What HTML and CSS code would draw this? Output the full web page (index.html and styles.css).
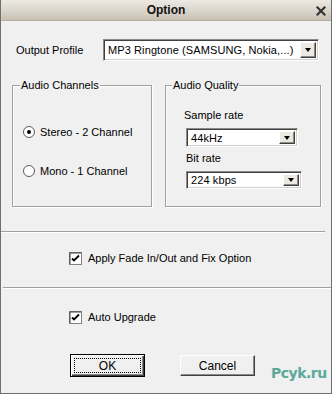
FILE: index.html
```html
<!DOCTYPE html>
<html lang="en">
<head>
    <meta charset="UTF-8">
    <meta name="viewport" content="width=device-width, initial-scale=1.0">
    <title>Option</title>
    <link rel="stylesheet" href="styles.css">
</head>
<body>
    <div class="window">
        <div class="titlebar">
            <span class="title">Option</span>
            <svg class="close" width="10" height="10" viewBox="0 0 10 10">
                <path d="M1.5 1.5l7 7M8.5 1.5l-7 7" stroke="#333" stroke-width="2.2" stroke-linecap="square"/>
            </svg>
        </div>

        <div class="content">
            <div class="profileRow">
                <label class="profileLabel">Output Profile</label>
                <div class="combo comboWide">
                    <span class="comboText">MP3 Ringtone (SAMSUNG, Nokia,...)</span>
                    <span class="comboBtn"><span class="arrow"></span></span>
                </div>
            </div>

            <div class="groups">
                <fieldset class="group groupChannels">
                    <legend>Audio Channels</legend>
                    <div class="radio first">
                        <svg width="12" height="12" viewBox="0 0 12 12">
                            <circle cx="6" cy="6" r="5.5" fill="#fff" stroke="#5a5a5a"/>
                            <circle cx="6" cy="6" r="2" fill="#000"/>
                        </svg>
                        <span>Stereo - 2 Channel</span>
                    </div>
                    <div class="radio">
                        <svg width="12" height="12" viewBox="0 0 12 12">
                            <circle cx="6" cy="6" r="5.5" fill="#fff" stroke="#5a5a5a"/>
                        </svg>
                        <span>Mono - 1 Channel</span>
                    </div>
                </fieldset>

                <fieldset class="group groupQuality">
                    <legend>Audio Quality</legend>
                    <div class="fieldLabel sample">Sample rate</div>
                    <div class="combo comboSample">
                        <span class="comboText">44kHz</span>
                        <span class="comboBtn"><span class="arrow"></span></span>
                    </div>
                    <div class="fieldLabel bit">Bit rate</div>
                    <div class="combo comboBit">
                        <span class="comboText">224 kbps</span>
                        <span class="comboBtn"><span class="arrow"></span></span>
                    </div>
                </fieldset>
            </div>

            <div class="separator sepOne"></div>

            <div class="check checkFade">
                <svg width="13" height="13" viewBox="0 0 13 13">
                    <rect x="0.5" y="0.5" width="12" height="12" fill="#fff" stroke="#808080"/>
                    <path d="M1 1h11M1 1v11" stroke="#404040" stroke-width="1" fill="none"/>
                    <path d="M3 6.5l2 2 5-5" stroke="#000" stroke-width="1.8" fill="none"/>
                </svg>
                <span>Apply Fade In/Out and Fix Option</span>
            </div>

            <div class="separator sepTwo"></div>

            <div class="check checkUpgrade">
                <svg width="13" height="13" viewBox="0 0 13 13">
                    <rect x="0.5" y="0.5" width="12" height="12" fill="#fff" stroke="#808080"/>
                    <path d="M1 1h11M1 1v11" stroke="#404040" stroke-width="1" fill="none"/>
                    <path d="M3 6.5l2 2 5-5" stroke="#000" stroke-width="1.8" fill="none"/>
                </svg>
                <span>Auto Upgrade</span>
            </div>

            <div class="buttons">
                <button class="btn btnDefault"><span class="focus">OK</span></button>
                <button class="btn btnCancel">Cancel</button>
                <span class="watermark">Pcyk.ru</span>
            </div>
        </div>
    </div>
</body>
</html>
```

FILE: styles.css
```css
*{
    margin: 0;
    padding: 0;
    box-sizing: border-box;
}
body{
    width: 332px;
    height: 394px;
    overflow: hidden;
    font-family: "Liberation Sans", Arial, sans-serif;
    font-size: 11px;
    color: #000;
    background-color: #f0f0f0;
}
.window{
    width: 332px;
    height: 394px;
    border: 1px solid #6f6f6f;
    border-top: none;
    background-color: #f0f0f0;
}
.titlebar{
    height: 21px;
    display: flex;
    align-items: center;
    justify-content: center;
    position: relative;
    background: linear-gradient(#ece9e3, #d8d2c8 60%, #c7bfb3);
    border-bottom: 1px solid #b8b0a4;
}
.title{
    font-weight: bold;
    font-size: 12px;
    color: #111;
}
.close{
    position: absolute;
    right: 5px;
    top: 6px;
}
.content{
    padding-top: 18px;
}
.profileRow{
    display: flex;
    align-items: center;
    height: 22px;
    padding-left: 15px;
}
.profileLabel{
    width: 87px;
}
.combo{
    display: flex;
    align-items: center;
    background-color: #fff;
    border: 1px solid;
    border-color: #8a8a8a #fff #fff #8a8a8a;
    box-shadow: inset 1px 1px 0 #404040, inset -1px -1px 0 #d4d0c8;
    padding: 2px;
}
.comboText{
    flex: 1;
    padding-left: 2px;
    white-space: nowrap;
    overflow: hidden;
    letter-spacing: 0.1px;
}
.comboBtn{
    width: 16px;
    height: 100%;
    display: flex;
    align-items: center;
    justify-content: center;
    background-color: #ece9e3;
    border: 1px solid;
    border-color: #fff #404040 #404040 #fff;
    box-shadow: inset -1px -1px 0 #8a8a8a;
}
.arrow{
    width: 0;
    height: 0;
    border-left: 3.5px solid transparent;
    border-right: 3.5px solid transparent;
    border-top: 4px solid #000;
}
.comboWide{
    width: 216px;
    height: 22px;
}
.groups{
    display: flex;
    margin-top: 18px;
    padding-left: 11px;
    gap: 13px;
}
.group{
    border: 1px solid #a0a0a0;
    box-shadow: 1px 1px 0 #fff, inset 1px 1px 0 #fff;
    height: 128px;
}
.group legend{
    padding: 0 1px;
    line-height: 13px;
}
.groupChannels{
    width: 140px;
    padding: 0 0 0 10px;
}
.groupChannels legend{
    margin-left: -3px;
}
.groupQuality{
    width: 156px;
    padding: 0 0 0 20px;
}
.groupQuality legend{
    margin-left: -14px;
}
.radio{
    display: flex;
    align-items: center;
    gap: 5px;
    height: 16px;
    margin-top: 23px;
}
.radio.first{
    margin-top: 32px;
}
.fieldLabel{
    line-height: 13px;
}
.fieldLabel.sample{
    margin-top: 17px;
    margin-left: -2px;
}
.fieldLabel.bit{
    margin-top: 5px;
}
.comboSample{
    width: 112px;
    height: 19px;
    margin-top: 6px;
}
.comboBit{
    width: 116px;
    height: 18px;
    margin-top: 6px;
}
.separator{
    height: 2px;
    border-top: 1px solid #a0a0a0;
    border-bottom: 1px solid #fff;
}
.sepOne{
    margin-top: 24px;
    margin-right: 6px;
}
.sepTwo{
    margin-top: 22px;
    margin-left: 2px;
}
.check{
    display: flex;
    align-items: center;
    gap: 6px;
    height: 14px;
    padding-left: 68px;
}
.checkFade{
    margin-top: 18px;
}
.checkUpgrade{
    margin-top: 21px;
}
.buttons{
    display: flex;
    align-items: flex-start;
    margin-top: 30px;
    padding-left: 69px;
}
.btn{
    font-family: "Liberation Sans", Arial, sans-serif;
    font-size: 12px;
    width: 75px;
    height: 21px;
    background-color: #f0f0f0;
    border: 1px solid;
    border-color: #fff #404040 #404040 #fff;
    box-shadow: inset -1px -1px 0 #8a8a8a;
}
.btnDefault{
    height: 23px;
    border: 1px solid #000;
    box-shadow: inset 1px 1px 0 #fff, inset -1px -1px 0 #404040, inset -2px -2px 0 #8a8a8a;
    padding: 3px;
}
.btnDefault .focus{
    display: flex;
    align-items: center;
    justify-content: center;
    height: 100%;
    border: 1px dotted #000;
}
.btnCancel{
    margin-left: 35px;
    margin-top: 1px;
}
.watermark{
    margin-left: 16px;
    margin-top: 11px;
    font-family: "DejaVu Sans", sans-serif;
    font-weight: bold;
    font-size: 14px;
    letter-spacing: -0.5px;
    color: #3f9c8c;
    opacity: 0.85;
}
```
